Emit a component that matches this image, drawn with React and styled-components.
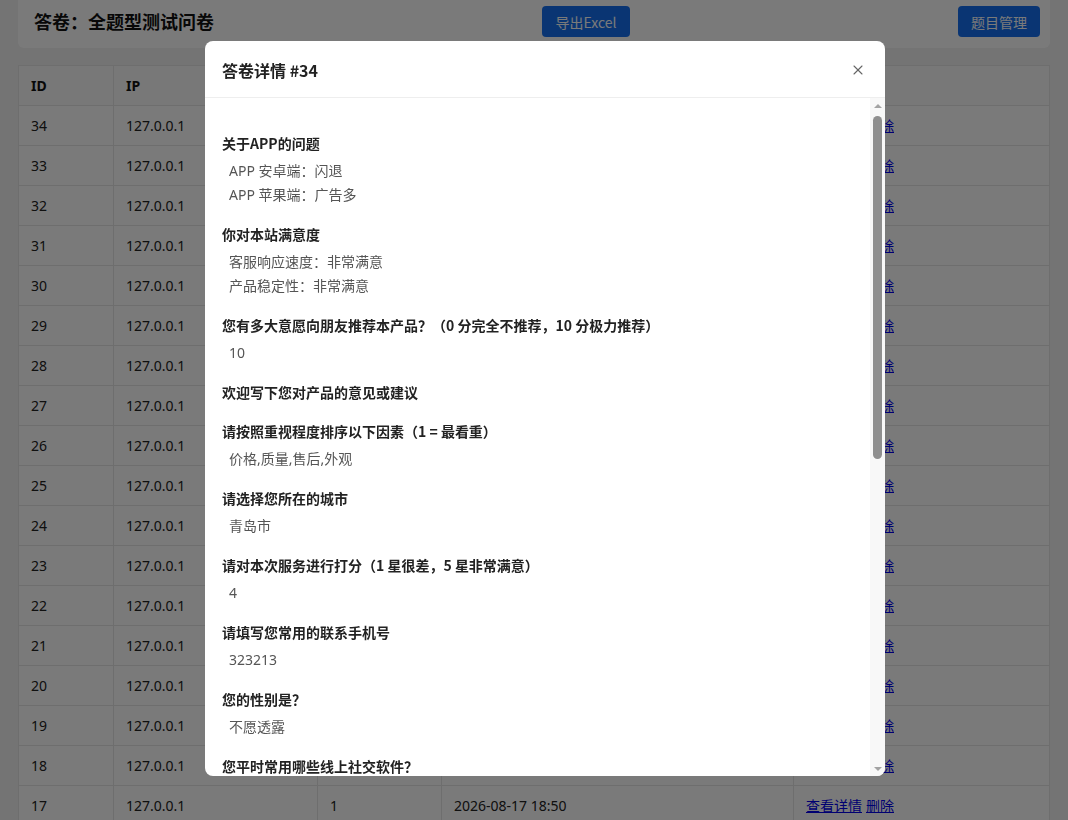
import React from 'react'
import styled, { createGlobalStyle } from 'styled-components'
import { X } from 'lucide-react'

const GlobalStyle = createGlobalStyle`
  body {
    margin: 0;
    background: #f2f2f2;
    font-family: "Noto Sans", "Noto Sans CJK SC", sans-serif;
    color: #222;
    overflow: hidden;
  }
`

const Page = styled.div`
  padding: 0 18px;
`

const HeaderCard = styled.div`
  display: flex;
  align-items: center;
  justify-content: space-between;
  background: #fff;
  border-radius: 0 0 6px 6px;
  padding: 6px 10px 11px 16px;
`

const PageTitle = styled.h1`
  margin: 0;
  font-size: 18px;
  line-height: 31px;
  font-weight: 700;
  font-family: "Noto Sans CJK SC", sans-serif;
  color: #111;
`

const Button = styled.button`
  height: 31px;
  padding: 0 13px;
  border: none;
  border-radius: 4px;
  background: #1670f0;
  color: #fff;
  font-size: 14px;
  font-family: "Noto Sans CJK SC", sans-serif;
`

const Table = styled.table`
  width: 100%;
  margin-top: 17px;
  border-collapse: collapse;
  table-layout: fixed;
  background: #fff;
  font-size: 14px;
`

// widths are content widths: the cell adds 24px padding and a border
const Th = styled.th`
  width: ${p => p.$w ? `${p.$w}px` : 'auto'};
  padding: 10px 12px;
  line-height: 19px;
  text-align: left;
  font-weight: 700;
  color: #111;
  background: #fafafa;
  border: 1px solid #e6e6e6;
`

const Td = styled.td`
  padding: 10px 12px;
  line-height: 19px;
  color: #222;
  border: 1px solid #e6e6e6;
  white-space: nowrap;
`

const Link = styled.a`
  color: #0000ee;
  text-decoration: underline;
  font-family: "Noto Sans CJK SC", sans-serif;
  margin-right: 4px;
`

const Overlay = styled.div`
  position: fixed;
  inset: 0;
  background: rgba(0, 0, 0, 0.52);
  display: flex;
  align-items: center;
  justify-content: center;
  padding: 0 0 3px 22px;
`

const Modal = styled.div`
  display: flex;
  flex-direction: column;
  width: 680px;
  height: 735px;
  background: #fff;
  border-radius: 8px;
  overflow: hidden;
`

const ModalHeader = styled.div`
  display: flex;
  align-items: center;
  justify-content: space-between;
  flex-shrink: 0;
  box-sizing: border-box;
  height: 57px;
  padding: 1px 15px 0 17px;
  border-bottom: 1px solid #eee;
`

const ModalTitle = styled.h2`
  margin: 0;
  font-size: 16px;
  font-weight: 700;
  font-family: "Noto Sans CJK SC", sans-serif;
  color: #222;
`

const CloseButton = styled.button`
  display: flex;
  align-items: center;
  justify-content: center;
  width: 24px;
  height: 24px;
  padding: 0;
  border: none;
  background: none;
  color: #666;
`

const ModalBody = styled.div`
  flex: 1;
  min-height: 0;
  display: flex;
`

const Content = styled.div`
  flex: 1;
  overflow: hidden;
  padding: 35px 17px 0;
`

const ScrollTrack = styled.div`
  width: 15px;
  flex-shrink: 0;
  display: flex;
  flex-direction: column;
  align-items: center;
  background: #f8f8f8;
`

const ScrollArrow = styled.div`
  width: 15px;
  height: 15px;
  display: flex;
  align-items: center;
  justify-content: center;
  margin-top: ${p => p.$down ? 'auto' : '0'};

  &::before {
    content: '';
    border-left: 4px solid transparent;
    border-right: 4px solid transparent;
    ${p => p.$down ? 'border-top' : 'border-bottom'}: 4px solid #a3a3a3;
  }
`

const ScrollThumb = styled.div`
  width: 9px;
  height: 343px;
  margin-top: 3px;
  border-radius: 5px;
  background: #8f8f8f;
`

const Question = styled.div`
  margin-bottom: ${p => p.$empty ? '19px' : '17px'};
`

const QuestionTitle = styled.div`
  font-size: 14px;
  line-height: 20px;
  font-weight: 700;
  color: #222;
  font-family: "Noto Sans CJK SC", sans-serif;
`

const AnswerList = styled.div`
  margin-top: 6px;
  padding-left: 7px;
`

const Answer = styled.div`
  font-size: 14px;
  line-height: 24px;
  color: #555;
`

const questions = [
  { title: '关于APP的问题', answers: ['APP 安卓端：闪退', 'APP 苹果端：广告多'] },
  { title: '你对本站满意度', answers: ['客服响应速度：非常满意', '产品稳定性：非常满意'] },
  { title: '您有多大意愿向朋友推荐本产品？（0 分完全不推荐，10 分极力推荐）', answers: ['10'] },
  { title: '欢迎写下您对产品的意见或建议', answers: [] },
  { title: '请按照重视程度排序以下因素（1 = 最看重）', answers: ['价格,质量,售后,外观'] },
  { title: '请选择您所在的城市', answers: ['青岛市'] },
  { title: '请对本次服务进行打分（1 星很差，5 星非常满意）', answers: ['4'] },
  { title: '请填写您常用的联系手机号', answers: ['323213'] },
  { title: '您的性别是？', answers: ['不愿透露'] },
  { title: '您平时常用哪些线上社交软件？', answers: ['微信,QQ,微博'] },
  { title: '您的出生日期', answers: ['2000-01-01'] },
  { title: '您每月在网购上的花费大约是', answers: ['500-1000 元'] },
]

const ids = Array.from({ length: 18 }, (_, i) => 34 - i)

function App () {
  return (
    <>
      <GlobalStyle />
      <Page>
        <HeaderCard>
          <PageTitle>答卷：全题型测试问卷</PageTitle>
          <Button>导出Excel</Button>
          <Button>题目管理</Button>
        </HeaderCard>
        <Table>
          <thead>
            <tr>
              <Th $w={70}>ID</Th>
              <Th $w={179}>IP</Th>
              <Th $w={99}>用户</Th>
              <Th $w={327}>提交时间</Th>
              <Th>操作</Th>
            </tr>
          </thead>
          <tbody>
            {ids.map(id => (
              <tr key={id}>
                <Td>{id}</Td>
                <Td>127.0.0.1</Td>
                <Td>1</Td>
                <Td>2026-08-17 18:50</Td>
                <Td>
                  <Link href='#'>查看详情</Link>
                  <Link href='#'>删除</Link>
                </Td>
              </tr>
            ))}
          </tbody>
        </Table>
      </Page>
      <Overlay>
        <Modal>
          <ModalHeader>
            <ModalTitle>答卷详情 #34</ModalTitle>
            <CloseButton aria-label='关闭'>
              <X size={16} strokeWidth={1.6} />
            </CloseButton>
          </ModalHeader>
          <ModalBody>
            <Content>
              {questions.map(q => (
                <Question key={q.title} $empty={q.answers.length === 0}>
                  <QuestionTitle>{q.title}</QuestionTitle>
                  {q.answers.length > 0 && (
                    <AnswerList>
                      {q.answers.map(a => <Answer key={a}>{a}</Answer>)}
                    </AnswerList>
                  )}
                </Question>
              ))}
            </Content>
            <ScrollTrack>
              <ScrollArrow />
              <ScrollThumb />
              <ScrollArrow $down />
            </ScrollTrack>
          </ModalBody>
        </Modal>
      </Overlay>
    </>
  )
}

export default App
